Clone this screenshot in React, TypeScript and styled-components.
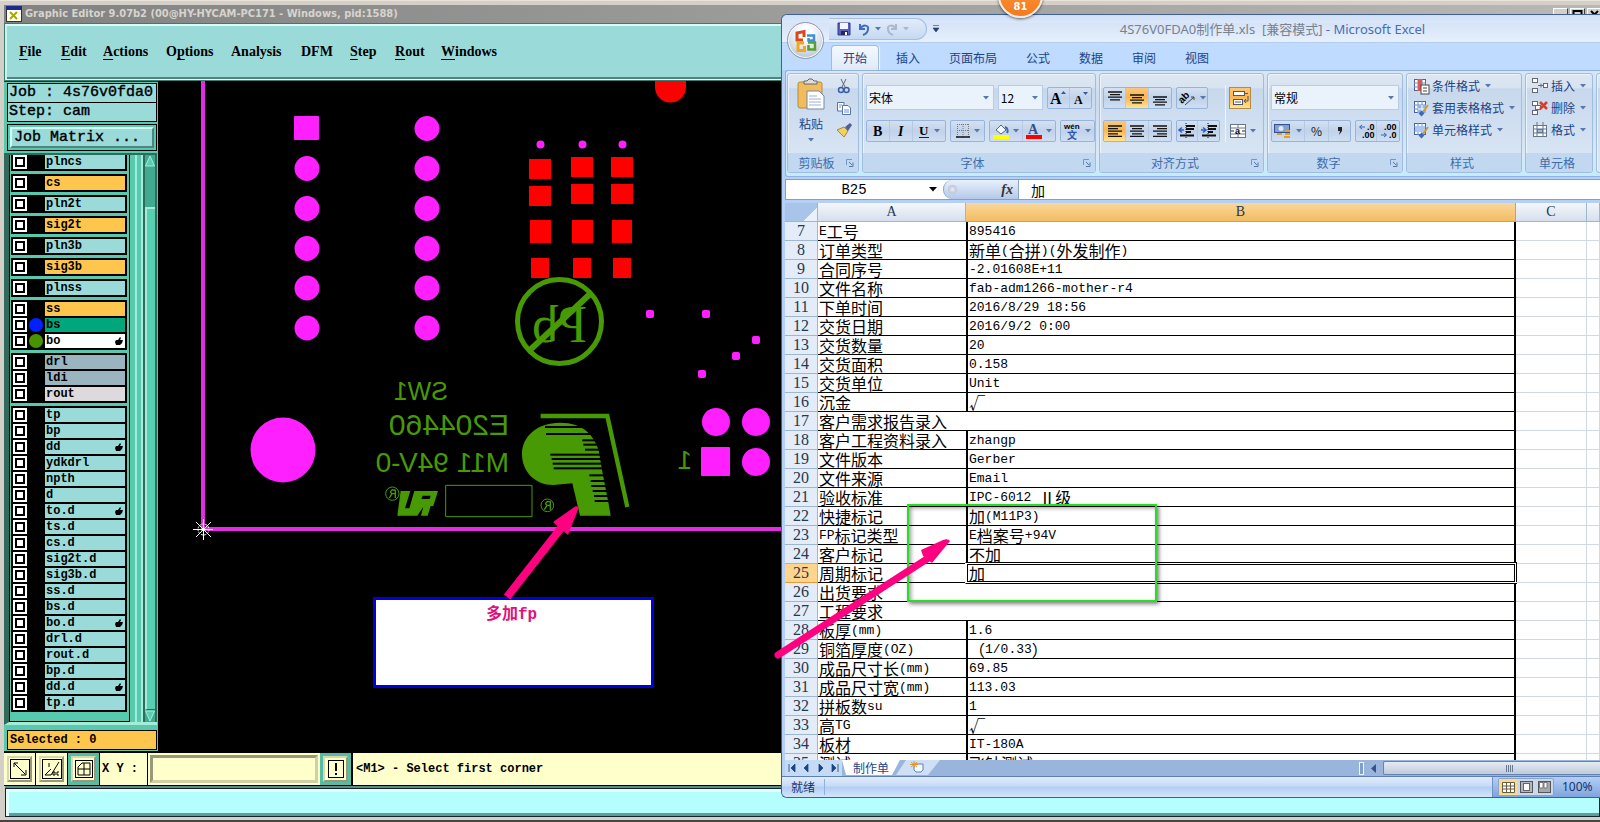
import React from "react";
import styled, { createGlobalStyle, css } from "styled-components";

const cjk = `"Noto Sans CJK SC", sans-serif`;
const ui = `"Noto Sans", ${cjk}`;
const mono = `"Liberation Mono", ${cjk}`;

const GlobalStyle = createGlobalStyle`
  *, *::before, *::after { box-sizing: border-box; }
  body { margin: 0; overflow: hidden; background: #d4d0c8; }
  button, input, select { margin: 0; padding: 0; font: inherit; color: inherit; border-radius: 0; outline: none; }
  button { display: flex; align-items: center; justify-content: center; background: none; border: 0; }
  svg { display: block; flex: none; overflow: visible; }
`;

const Desktop = styled.div`
  position: relative;
  height: 100vh;
  min-height: 760px;
  overflow: hidden;
`;

/* ---------- Graphic editor ---------- */

const Editor = styled.section`
  display: flex;
  flex-direction: column;
  height: 100%;
  padding: 4px 0 3px 4px;
  background: #d4d0c8;
  border-top: 1px solid #e8e4dc;
  border-bottom: 2px solid #46443f;
`;

const EditorTitle = styled.header`
  display: flex;
  align-items: center;
  gap: 3px;
  height: 18px;
  padding-left: 2px;
  background: linear-gradient(90deg, #828282, #b8b8b6);
  color: #d8d4cc;
  font: bold 11px/18px "DejaVu Sans Condensed", sans-serif;
  white-space: nowrap;
`;

const EditorTitleText = styled.span`
  flex: 1;
`;

const WindowButtons = styled.div`
  display: flex;
  gap: 2px;
  padding-top: 1px;
  margin-right: -2px;
`;

const WindowButton = styled.button`
  width: 15px;
  height: 14px;
  background: #d4d0c8;
  border: 1px solid;
  border-color: #fff #404040 #404040 #fff;
`;

const MenuBar = styled.nav`
  display: grid;
  grid-template-columns: 42px 42px 63px 65px 70px 49px 45px 46px 60px;
  align-items: center;
  height: 58px;
  padding: 0 0 2px 12px;
  background: #9adbda;
  border: solid;
  border-width: 3px 0 2px 3px;
  border-color: #d8fcf8 #d8fcf8 #e4fffc #c8f4f0;
  box-shadow: inset 0 -2px 0 #4f8480;
  outline: 1px solid #3d7a70;
  outline-offset: -1px;
  font: bold 14px/16px "Liberation Serif", serif;
`;

const MenuItem = styled.button`
  justify-content: flex-start;
  u { text-underline-offset: 3px; }
`;

const Work = styled.div`
  display: flex;
  flex: 1;
  min-height: 0;
  background: #000;
`;

const Sidebar = styled.aside`
  display: flex;
  flex-direction: column;
  width: 154px;
  padding: 1px 1px 1px 3px;
  background: #57c9ae;
  border-top: 1px solid #143c34;
  font: bold 12px/14px ${mono};
`;

const Info = styled.div`
  height: 20px;
  margin-bottom: -1px;
  padding-left: 1px;
  border: 1px solid #000;
  background: #9adbda;
  font-size: 15px;
  font-weight: 400;
  line-height: 17px;
  white-space: pre;
  -webkit-text-stroke: 0.4px #000;
`;

const MatrixFrame = styled.div`
  margin-top: 3px;
  padding: 2px;
  border: 1px solid #000;
`;

const MatrixButton = styled.button`
  width: 100%;
  height: 21px;
  justify-content: flex-start;
  padding-left: 2px;
  background: #9adbda;
  border: 2px solid;
  border-color: #d4fff8 #4f8480 #4f8480 #d4fff8;
  font-size: 15px;
  font-weight: 400;
  -webkit-text-stroke: 0.4px #000;
`;

const ListArea = styled.div`
  display: flex;
  flex: 1;
  min-height: 0;
  margin: 2px 0 0 -3px;
  border-left: 5px solid #2f6b5c;
  border-top: 2px solid #2f6b5c;
  border-bottom: 3px solid #a4ecd8;
`;

const LayerList = styled.ul`
  display: flex;
  flex-direction: column;
  gap: 3px;
  width: 122px;
  margin: 0;
  padding: 0 2px 0 1px;
  list-style: none;
  overflow: hidden;
  border: solid #000;
  border-width: 0 1px 1px;
`;

const LayerGroup = styled.li`
  display: flex;
  flex-direction: column;
  gap: 2px;
  padding: 2px;
  background: #000;
  &:first-child { padding-top: 0; }
`;

const Layer = styled.label`
  display: grid;
  grid-template-columns: 14px 18px 1fr;
  height: 14px;
`;

const LayerCheck = styled.input`
  appearance: none;
  width: 14px;
  height: 14px;
  background: #fff;
  border: 2px solid #fff;
  box-shadow: inset 0 0 0 2px #000;
`;

const LayerColor = styled.span<{ $color?: string }>`
  width: 14px;
  height: 14px;
  margin-left: 2px;
  border-radius: 7px;
  background: ${(p) => p.$color ?? "transparent"};
`;

const LayerName = styled.span<{ $bg: string }>`
  display: flex;
  justify-content: space-between;
  align-items: center;
  padding: 0 2px 0 1px;
  background: ${(p) => p.$bg};
`;

const ListEdge = styled.div`
  width: 8px;
  margin-left: 5px;
  border: solid #a4ecd8;
  border-width: 0 2px 0 2px;
`;

const LayerScroll = styled.div`
  display: flex;
  flex-direction: column;
  flex: 1;
  border: solid #2f6b5c;
  border-width: 0 2px;
  background: #42a991;
`;

const ScrollThumb = styled.div`
  flex: 1;
  margin-top: 40px;
  background: #57d0b2;
  border: solid #a4ecd8;
  border-width: 2px 0 0 2px;
  border-bottom: 1px solid #2f6b5c;
`;

const Selected = styled.div`
  height: 20px;
  margin-top: 5px;
  padding: 2px;
  border: 1px solid #000;
  background: #ffc64d;
`;

const Canvas = styled.main`
  flex: 1;
  min-width: 0;
  overflow: hidden;
`;

const CommandBar = styled.footer`
  display: flex;
  align-items: stretch;
  height: 35px;
  background: #ffffcc;
  border-top: 2px solid #000;
  border-bottom: 1px solid #000;
  font: bold 12px/32px ${mono};
`;

const ToolSlot = styled.div<{ $active?: boolean }>`
  padding: 3px;
  width: 32px;
  border-right: 1px solid #000;
  background: ${(p) => (p.$active ? "#55bda4" : "#ffffcc")};
`;

const ToolButton = styled.button`
  width: 25px;
  height: 26px;
  background: #ffffcc;
  border: 2px solid;
  border-color: #d8d8ac #98987a #98987a #d8d8ac;
`;

const XYLabel = styled.label`
  width: 48px;
  padding-left: 2px;
  border-right: 1px solid #000;
  white-space: pre;
`;

const XYInput = styled.input`
  width: 168px;
  margin: 2px;
  padding: 0 3px;
  background: #ffffcc;
  border: 3px solid;
  border-color: #98987a #d0d0a4 #d0d0a4 #98987a;
`;

const Hint = styled.output`
  padding-left: 3px;
  border-left: 1px solid #000;
`;

const MessageBar = styled.div`
  height: 29px;
  margin: 2px 0 0 1px;
  border: 1px solid #123;
  background: #b4fffd;
  box-shadow: inset 3px 3px 0 #e0fffc, inset 0 -3px 0 #5f9c9a, 0 -2px 0 #5e8c84;
`;

/* ---------- Annotations ---------- */

const Note = styled.p`
  position: absolute;
  left: 373px;
  top: 597px;
  width: 281px;
  height: 91px;
  margin: 0;
  padding-top: 6px;
  padding-right: 4px;
  border: 3px solid #0000dc;
  background: #fff;
  color: #e2107c;
  font: bold 16px/18px "Liberation Mono", ${cjk};
  text-align: center;
`;

const Overlay = styled.svg`
  position: absolute;
  left: 0;
  top: 0;
  width: 100%;
  height: 100%;
  pointer-events: none;
`;

const GreenFrame = styled.div`
  position: absolute;
  left: 907px;
  top: 504px;
  width: 250px;
  height: 98px;
  border: 2px solid #28dc28;
  box-shadow: 2px 2px 4px rgba(0, 0, 0, 0.5), inset 2px 2px 4px rgba(0, 0, 0, 0.4);
  pointer-events: none;
`;

const CountBadge = styled.div`
  position: absolute;
  left: 998px;
  top: -27px;
  width: 45px;
  height: 45px;
  border: 2px solid #f4ece4;
  border-radius: 50%;
  background: linear-gradient(#ff9a3c, #f47a20);
  box-shadow: 0 1px 3px rgba(0, 0, 0, 0.6);
  color: #fff;
  font: bold 11px/64px "DejaVu Sans Condensed", sans-serif;
  text-align: center;
`;

/* ---------- Spreadsheet window ---------- */

const Excel = styled.section`
  position: absolute;
  left: 781px;
  right: 0;
  top: 14px;
  bottom: 24px;
  display: flex;
  flex-direction: column;
  border: solid #3f5f92;
  border-width: 1px 0 1px 1px;
  border-radius: 6px 0 0 6px;
  background: #b4d0f4;
  overflow: hidden;
  font: 12px/16px ${cjk};
`;

const Caption = styled.header`
  display: flex;
  align-items: center;
  flex: none;
  height: 28px;
  background: linear-gradient(#cfe0f8 0, #dce8f9 30%, #d6e4f8 31%, #e6f0fd 100%);
  border-bottom: 1px solid #b4cdf0;
`;

const QuickAccess = styled.div`
  display: flex;
  align-items: center;
  gap: 4px;
  width: 98px;
  height: 22px;
  margin-left: 47px;
  padding-left: 6px;
  border: 1px solid #a4bee4;
  border-left: 0;
  border-radius: 0 11px 11px 0;
  background: linear-gradient(#e2ecfa, #c6d9f2);
`;

const CustomizeButton = styled.button`
  width: 18px;
  height: 20px;
`;

const WindowTitle = styled.h1`
  flex: 1;
  margin: 0;
  color: #77818f;
  font: 13px/20px ${ui};
  text-align: center;
  white-space: pre;
  span { color: #4a6db0; }
`;

const OfficeButton = styled.button`
  position: absolute;
  left: 5px;
  top: 7px;
  width: 37px;
  height: 37px;
  border: 1px solid #8b99ae;
  border-radius: 50%;
  background: radial-gradient(circle at 50% 30%, #fff 20%, #d4dbe6 60%, #b0bccd 90%);
  box-shadow: inset 0 0 0 1px #f8fafc;
`;

const Tabs = styled.nav`
  display: flex;
  align-items: flex-end;
  flex: none;
  height: 27px;
  padding-left: 49px;
  background: #bfdbff;
`;

const Tab = styled.button<{ $active?: boolean }>`
  height: 25px;
  padding: 0 13px;
  margin-right: 1px;
  border: 1px solid transparent;
  border-bottom: 0;
  color: #1b4486;
  ${(p) =>
    p.$active &&
    css`
      padding: 0 11px;
      margin-right: 3px;
      border-color: #9cbce8;
      border-radius: 4px 4px 0 0;
      background: linear-gradient(#f4f9ff, #dfe9f6);
      box-shadow: 1px 0 1px #fff8e0;
    `}
`;

const Ribbon = styled.div`
  display: flex;
  gap: 3px;
  flex: none;
  height: 107px;
  margin-left: 3px;
  padding: 2px 0 3px 1px;
  border: solid #8fb2e2;
  border-width: 1px 0 1px 1px;
  border-radius: 3px 0 0 3px;
  background: linear-gradient(#dbe6f4, #c9dbf0 30%, #d8e8f8 80%, #c4ecfa);
`;

const Group = styled.section<{ $w?: number }>`
  display: flex;
  flex-direction: column;
  flex: ${(p) => (p.$w ? "none" : "1 0 20px")};
  width: ${(p) => (p.$w ? p.$w + "px" : "auto")};
  border: 1px solid #9fbde0;
  border-radius: 3px;
  background: linear-gradient(#dde7f3 0, #d8e3f1 14%, #c8d8ec 15%, #dbe8f6 100%);
  box-shadow: inset 1px 1px 0 #edf3fa;
  overflow: hidden;
`;

const GroupBody = styled.div`
  display: flex;
  flex-direction: column;
  gap: 10px;
  flex: 1;
  padding: 11px 3px 0;
`;

const ToolRow = styled.div<{ $h: number }>`
  display: flex;
  align-items: center;
  gap: 4px;
  height: ${(p) => p.$h}px;
`;

const GroupCaption = styled.footer`
  display: flex;
  align-items: center;
  height: 19px;
  padding: 0 4px 0 0;
  background: #c1d8f0;
  color: #3f6cab;
  span { flex: 1; text-align: center; }
`;

const Launcher = styled.button`
  width: 9px;
  height: 13px;
`;

const ComboBox = styled.div<{ $w: number }>`
  position: relative;
  display: flex;
  align-items: center;
  width: ${(p) => p.$w}px;
  height: 25px;
  border: 1px solid #b5cde8;
  background: #eaf2fb;
  select {
    appearance: none;
    flex: 1;
    min-width: 0;
    height: 23px;
    padding-left: 2px;
    border: 0;
    background: transparent;
    color: #000;
  }
  svg { margin-right: 4px; pointer-events: none; }
`;

const ButtonSet = styled.div`
  display: flex;
  height: 22px;
  border: 1px solid #96b4dc;
  border-radius: 2px;
  background: linear-gradient(#d5e1f0, #c0d2ea 50%, #cfdef2);
`;

const SetButton = styled.button<{ $w: number; $on?: boolean }>`
  width: ${(p) => p.$w}px;
  gap: 4px;
  border-right: 1px solid #b4c9e4;
  color: #222;
  &:last-child { border-right: 0; }
  ${(p) => p.$on && css`background: linear-gradient(#f9c77d, #fbb552 45%, #ffe48c);`}
`;

const WrapToggle = styled.button`
  width: 22px;
  height: 22px;
  border: 1px solid #b58a45;
  background: linear-gradient(#f9c77d, #fbb552 45%, #ffe48c);
`;

const PlainButton = styled.button<{ $w?: number }>`
  width: ${(p) => p.$w ?? 28}px;
  gap: 4px;
`;

const AlignColumns = styled.div`
  display: grid;
  grid-template-columns: 118px 1fr;
  column-gap: 2px;
`;

const MergeColumn = styled.div`
  display: flex;
  flex-direction: column;
  gap: 10px;
  padding-left: 3px;
  border-left: 1px solid #eef4fb;
  margin-left: 2px;
`;

const Stack = styled.div`
  display: flex;
  flex-direction: column;
  gap: 10px;
`;

const Clipboard = styled.div`
  display: grid;
  grid-template-columns: 46px 24px;
  flex: 1;
  padding-top: 4px;
`;

const PasteButton = styled.button`
  flex-direction: column;
  justify-content: flex-start;
  gap: 6px;
  color: #1b4486;
`;

const ClipColumn = styled.div`
  display: flex;
  flex-direction: column;
  gap: 6px;
`;

const CommandList = styled.div`
  display: flex;
  flex-direction: column;
  gap: 6px;
  padding: 4px 0 0 6px;
  flex: 1;
`;

const Command = styled.button`
  justify-content: flex-start;
  gap: 3px;
  height: 16px;
  color: #1b4486;
  white-space: nowrap;
  span { margin-right: 2px; }
`;

const FormulaBar = styled.div`
  display: flex;
  flex: none;
  height: 21px;
  margin: 2px 0 3px 3px;
  border: solid #7f9fcc;
  border-width: 1px 0 1px 1px;
  background: #fff;
`;

const NameBox = styled.input`
  width: 136px;
  border: 0;
  text-align: center;
  font: 14px/18px ${mono};
`;

const FunctionBox = styled.div`
  display: flex;
  align-items: center;
  justify-content: space-between;
  width: 76px;
  padding: 0 5px 0 4px;
  border: 1px solid #8ba6cc;
  border-top: 0;
  border-bottom: 0;
  border-radius: 9px 0 0 9px;
  background: linear-gradient(#e8f0fb, #b4c9e8);
  color: #333;
  font: italic bold 14px/18px "Liberation Serif", serif;
`;

const Knob = styled.i`
  width: 9px;
  height: 9px;
  border-radius: 50%;
  background: radial-gradient(#e8ecf4, #a8b4c8);
`;

const FormulaInput = styled.input`
  flex: 1;
  min-width: 0;
  padding-left: 12px;
  border: 0;
  font: 14px/18px ${cjk};
`;

const SheetView = styled.div`
  flex: 1;
  min-height: 0;
  margin-left: 3px;
  overflow: hidden;
  background: #fff;
`;

const Sheet = styled.table`
  width: 100%;
  table-layout: fixed;
  border-collapse: separate;
  border-spacing: 0;
  color: #000;
`;

const ColHead = styled.th<{ $on?: boolean }>`
  height: 19px;
  padding: 0;
  border: solid #9eb6ce;
  border-width: 0 1px 1px 0;
  background: linear-gradient(#f4f7fb, #d5dfec);
  color: #27384c;
  font: 14px/18px "Liberation Serif", serif;
  ${(p) =>
    p.$on &&
    css`
      border-color: #e69b35;
      background: linear-gradient(#fad79c, #f3bd62);
    `}
`;

const Corner = styled(ColHead)`
  background: linear-gradient(135deg, #a9c4e9 72%, #e8f0fa 73%);
`;

const RowHead = styled.th<{ $on?: boolean }>`
  height: 19px;
  padding: 0;
  border: solid #9eb6ce;
  border-width: 0 1px 1px 0;
  background: ${(p) => (p.$on ? "#ffd58d" : "#e4ecf7")};
  border-bottom-color: ${(p) => (p.$on ? "#e69b35" : "#9eb6ce")};
  color: #27384c;
  font: 16px/18px "Liberation Serif", serif;
`;

const Cell = styled.td<{ $line?: boolean; $left?: boolean; $right?: boolean; $active?: boolean }>`
  position: relative;
  height: 19px;
  padding: 0 0 0 1px;
  border: 0 solid #000;
  border-bottom: 1px solid ${(p) => (p.$line ? "#000" : "#d0d7e5")};
  border-left-width: ${(p) => (p.$left ? 2 : 0)}px;
  border-right-width: ${(p) => (p.$right ? 2 : 0)}px;
  ${(p) =>
    !p.$line &&
    css`
      border-right: 1px solid #d0d7e5;
    `}
  ${(p) =>
    p.$active &&
    css`
      &::after {
        content: "";
        position: absolute;
        inset: -2px -3px -2px -3px;
        border: 1px solid #000;
        border-left-color: #fff;
        box-shadow: inset 0 0 0 1px #fff, inset 0 0 0 2px #000;
      }
    `}
`;

const CellText = styled.div`
  display: flex;
  align-items: flex-start;
  height: 18px;
  white-space: pre;
`;

const Latin = styled.span`
  font: 13px/20px ${mono};
`;

const Wide = styled.span`
  font: 16px/18px ${cjk};
`;

const SheetBar = styled.div`
  display: flex;
  flex: none;
  height: 16px;
  margin-left: 3px;
  background: #9ab5dc;
  color: #1b4486;
`;

const SheetNav = styled.div`
  display: flex;
  align-items: center;
  justify-content: space-around;
  width: 57px;
  background: #c5daf5;
`;

const SheetTab = styled.button`
  width: 58px;
  height: 15px;
  background: #fff;
  clip-path: polygon(0 0, 100% 0, calc(100% - 8px) 100%, 4px 100%);
  line-height: 14px;
`;

const NewSheet = styled.button`
  width: 44px;
  height: 15px;
  margin-left: -4px;
  background: #cfe0f6;
  clip-path: polygon(10px 0, 100% 0, calc(100% - 12px) 100%, 0 100%);
`;

const HScroll = styled.div`
  display: flex;
  align-items: center;
  gap: 7px;
  width: 241px;
  margin-left: auto;
`;

const Splitter = styled.i`
  width: 5px;
  height: 13px;
  border: 1px solid #eef4fc;
  background: #7f9fcc;
`;

const HThumb = styled.div`
  display: flex;
  align-items: center;
  justify-content: center;
  flex: 1;
  height: 14px;
  padding-left: 36px;
  border: 1px solid #6683b4;
  border-right: 0;
  border-radius: 2px 0 0 2px;
  background: linear-gradient(#e4ebf3, #c0cbd9);
`;

const StatusBar = styled.footer`
  display: flex;
  align-items: center;
  flex: none;
  height: 21px;
  border-top: 1px solid #5c7fb5;
  background: linear-gradient(#e0ecfc 0, #c6dbf7 45%, #b2cdf3 50%, #d4e5fb 100%);
  color: #15356e;
`;

const StatusText = styled.span`
  padding: 0 9px;
  border-right: 1px solid #8fb0e0;
`;

const ViewArea = styled.div`
  display: flex;
  align-items: center;
  gap: 8px;
  height: 20px;
  width: 108px;
  margin-left: auto;
  padding-left: 5px;
  border-left: 1px solid #6f92c8;
  background: linear-gradient(#b4cff5, #7fa4dc);
`;

const ViewButtons = styled.div`
  display: flex;
  border: 1px solid #88a4cc;
  border-radius: 2px;
  background: #c8d8ee;
`;

const ViewButton = styled.button<{ $on?: boolean }>`
  width: 18px;
  height: 16px;
  background: ${(p) => (p.$on ? "#fbd98e" : "transparent")};
`;

const Zoom = styled.span`
  font: 12px/18px ${ui};
`;

/* ---------- Data ---------- */

const AQUA = "#9adbda";
const GOLD = "#ffc64d";

type LayerInfo = { n: string; bg?: string; dot?: string; hand?: boolean };

const layerGroups: LayerInfo[][] = [
  [{ n: "plncs" }],
  [{ n: "cs", bg: GOLD }],
  [{ n: "pln2t" }],
  [{ n: "sig2t", bg: GOLD }],
  [{ n: "pln3b" }],
  [{ n: "sig3b", bg: GOLD }],
  [{ n: "plnss" }],
  [
    { n: "ss", bg: GOLD },
    { n: "bs", bg: "#00a67c", dot: "#0020ff" },
    { n: "bo", bg: "#fff", dot: "#489400", hand: true },
  ],
  [
    { n: "drl", bg: "#9ab4c0" },
    { n: "ldi", bg: "#9ab4c0" },
    { n: "rout", bg: "#dcdadc" },
  ],
  [
    ...["tp", "bp", "dd*", "ydkdrl", "npth", "d", "to.d*", "ts.d", "cs.d", "sig2t.d", "sig3b.d", "ss.d", "bs.d", "bo.d*", "drl.d", "rout.d", "bp.d", "dd.d*", "tp.d"].map((s) => ({
      n: s.replace("*", ""),
      hand: s.endsWith("*"),
    })),
  ],
];

const sheetRows: [number, string, string?][] = [
  [7, "E工号", "895416"],
  [8, "订单类型", "新单(合拼)(外发制作)"],
  [9, "合同序号", "-2.01608E+11"],
  [10, "文件名称", "fab-adm1266-mother-r4"],
  [11, "下单时间", "2016/8/29 18:56"],
  [12, "交货日期", "2016/9/2 0:00"],
  [13, "交货数量", "20"],
  [14, "交货面积", "0.158"],
  [15, "交货单位", "Unit"],
  [16, "沉金", "√"],
  [17, "客户需求报告录入"],
  [18, "客户工程资料录入", "zhangp"],
  [19, "文件版本", "Gerber"],
  [20, "文件来源", "Email"],
  [21, "验收标准", "IPC-6012 Ⅱ级"],
  [22, "快捷标记", "加(M11P3)"],
  [23, "FP标记类型", "E档案号+94V"],
  [24, "客户标记", "不加"],
  [25, "周期标记", "加"],
  [26, "出货要求"],
  [27, "工程要求"],
  [28, "板厚(mm)", "1.6"],
  [29, "铜箔厚度(OZ)", "（1/0.33）"],
  [30, "成品尺寸长(mm)", "69.85"],
  [31, "成品尺寸宽(mm)", "113.03"],
  [32, "拼板数su", "1"],
  [33, "高TG", "√"],
  [34, "板材", "IT-180A"],
  [35, "测试", "飞针测试"],
];

const menus: [string, string, string][] = [
  ["", "F", "ile"],
  ["", "E", "dit"],
  ["", "A", "ctions"],
  ["O", "p", "tions"],
  ["Analysis", "", ""],
  ["DFM", "", ""],
  ["", "S", "tep"],
  ["", "R", "out"],
  ["", "W", "indows"],
];

/* ---------- Small drawings ---------- */

const Caret = ({ color = "#5878ac" }: { color?: string }) => (
  <svg width="6" height="4">
    <path d="M0 0H6L3 3.5Z" fill={color} />
  </svg>
);

const Lines = ({ rows, y = 3 }: { rows: [number, number][]; y?: number }) => (
  <svg width="16" height="16" stroke="#111" strokeWidth="1.3">
    {rows.map(([a, b], i) => (
      <path key={i} d={`M${a} ${y + i * 2.6}H${b}`} />
    ))}
  </svg>
);

const Indent = ({ right }: { right?: boolean }) => (
  <svg width="18" height="16">
    <path d="M8 3H17M8 6H16M8 9H13M2 12.500H16" stroke="#111" strokeWidth="1.8" />
    <path d="M8 0V16" stroke="#111" strokeDasharray="1 1" />
    <path d={right ? "M1 7H5M3 4.5L6 7L3 9.5" : "M6 7H2M4 4.5L1 7L4 9.5"} stroke="#2f62c0" strokeWidth="1.5" fill="none" />
  </svg>
);

const Hand = () => (
  <svg width="8" height="8">
    <path d="M1 3L3 3L5 0L6 1L5 3H8L7 6L5 8H1L0 5Z" fill="#000" />
  </svg>
);

const GridIcon = ({ extra }: { extra: React.ReactNode }) => (
  <svg width="16" height="16">
    <rect x="1.500" y="1.500" width="11" height="11" fill="#fff" stroke="#48629a" />
    <path d="M1 5H13M1 9H13M5 1V13M9 1V13" stroke="#6f8fc8" />
    {extra}
  </svg>
);

const LaunchIcon = () => (
  <svg width="8" height="8">
    <path d="M.5 6V.5H6" stroke="#7894c0" fill="none" />
    <path d="M3 3L6 6M7 3.500V7.500H3" stroke="#5478ac" fill="none" />
  </svg>
);

const GroupFooter = ({ text, launch }: { text: string; launch?: boolean }) => (
  <GroupCaption>
    <span>{text}</span>
    {launch && (
      <Launcher aria-label={text}>
        <LaunchIcon />
      </Launcher>
    )}
  </GroupCaption>
);

const Runs = ({ text }: { text: string }) => (
  <CellText>
    {text.split(/([\x20-\x7e]+)/).filter(Boolean).map((part, i) =>
      /^[\x20-\x7e]/.test(part) ? <Latin key={i}>{part}</Latin> : <Wide key={i}>{part}</Wide>
    )}
  </CellText>
);

const Mirrored = ({ x, y, size, family = "Liberation Sans", children }: { x: number; y: number; size: number; family?: string; children: string }) => (
  <text transform={`translate(${x} ${y}) scale(-1 1)`} fontSize={size} fontFamily={family}>
    {children}
  </text>
);

const MAG = "#ff20ff";
const GREEN = "#489a04";

/* dark slots cut into the emblem: y, left, right */
const emblemSlots: [number, number, number][] = [
  [78, 525, 640], [99, 528, 660], [118, 637, 690], [131, 640, 700], [146, 645, 700],
  [161, 541, 700], [174, 545, 700], [188, 548, 705], [202, 551, 705], [223, 658, 712],
  [240, 662, 715], [255, 664, 718], [270, 668, 720], [285, 672, 724], [300, 674, 726],
];

const Board = () => (
  <svg width="1442" height="671" viewBox="158 81 1442 671">
    <g fill={MAG}>
      <rect x="294" y="116" width="25" height="24" rx="1" />
      <circle cx="427" cy="128.500" r="12.500" />
      {[168.5, 208.5, 248.5, 288, 328].map((y) => (
        <React.Fragment key={y}>
          <circle cx="307" cy={y} r="12.500" />
          <circle cx="427" cy={y} r="12.500" />
        </React.Fragment>
      ))}
      <circle cx="283" cy="450" r="32.500" />
      {[540.5, 582.5, 622.5].map((x) => <circle key={x} cx={x} cy="144.500" r="4" />)}
      {[[650, 314], [706, 314], [756, 340], [736, 356], [702, 374]].map(([x, y]) => (
        <rect key={x} x={x - 4} y={y - 4} width="8" height="8" rx="2" />
      ))}
      <circle cx="716" cy="422" r="14" />
      <circle cx="756" cy="422" r="14" />
      <circle cx="756" cy="462" r="14" />
      <rect x="701" y="447" width="29" height="29" rx="1" />
    </g>
    <path d="M203 81V529H1600" fill="none" stroke="#e42ce4" strokeWidth="4" />
    <g stroke="#fff" fill="none">
      <path d="M193 529.500H213M203.500 519V540M196 522L211 537M211 522L196 537" />
      <circle cx="203.500" cy="529.500" r="5.500" strokeDasharray="2 1" />
    </g>
    <g fill="#f00">
      <path d="M655 81H686V87A15.500 15.500 0 0 1 655 87Z" />
      <path d="M529 159h22v20h-22zM529 186h22v20h-22zM530 220h21v23h-21zM531 258h18v20h-18z" />
      <path d="M571 157h22v20h-22zM571 184h22v20h-22zM572 220h21v23h-21zM573 258h18v20h-18z" />
      <path d="M611 157h22v20h-22zM611 184h22v20h-22zM612 220h20v23h-20zM613 258h18v20h-18z" />
    </g>
    <g fill={GREEN}>
      <Mirrored x={587} y={342} size={52} family="Liberation Serif">Pb</Mirrored>
      <circle cx="559.500" cy="321.500" r="42" fill="none" stroke={GREEN} strokeWidth="5" />
      <path d="M530 350L590 294" stroke={GREEN} strokeWidth="6" />
      <Mirrored x={448} y={400} size={25}>SW1</Mirrored>
      <Mirrored x={509} y={435} size={30}>E204460</Mirrored>
      <Mirrored x={509} y={472} size={28}>M11 94V-0</Mirrored>
      <Mirrored x={692} y={469} size={26}>1</Mirrored>
    </g>
    <g transform="translate(370 400) scale(.33333)">
      <path d="M570 68C500 68 456 110 456 162C456 215 495 255 550 255L607 250L630 347H722L716 312L697 215L686 150C670 105 640 68 570 68Z" fill={GREEN} />
      {emblemSlots.map(([y, a, b]) => <rect key={y} x={a} y={y} width={b - a} height="6" fill="#000" />)}
      <path d="M512 48H712L772 321" fill="none" stroke={GREEN} strokeWidth="13" />
      <path d="M227 256H486V350H227Z" fill="none" stroke={GREEN} strokeWidth="3" />
      <path d="M92 273H121L105 325H118L133 273H204L190 318H182L173 347H153L160 320L142 347H82Z" fill={GREEN} />
      <path d="M158 287H182L179 297H154Z" fill="#000" />
      <circle cx="67" cy="281" r="20" fill="none" stroke={GREEN} strokeWidth="3" />
      <circle cx="532" cy="316" r="19" fill="none" stroke={GREEN} strokeWidth="3" />
      <path d="M76 269V294M76 270H66Q58 276 66 281H76M66 281L58 294" fill="none" stroke={GREEN} strokeWidth="4" />
      <path d="M541 304V329M541 305H531Q523 311 531 316H541M531 316L523 329" fill="none" stroke={GREEN} strokeWidth="4" />
    </g>
  </svg>
);

/* ---------- Page ---------- */

export default function App() {
  return (
    <Desktop>
      <GlobalStyle />
      <Editor>
        <EditorTitle>
          <svg width="16" height="16">
            <rect x=".5" y=".5" width="15" height="15" fill="#fffff0" stroke="#333" />
            <rect width="16" height="4" fill="#1a2a90" />
            <path d="M4 6L11 13M11 6L4 13" stroke="#a8a800" strokeWidth="2" />
          </svg>
          <EditorTitleText>Graphic Editor 9.07b2 (00@HY-HYCAM-PC171 - Windows, pid:1588)</EditorTitleText>
          <WindowButtons>
            <WindowButton aria-label="Minimize" />
            <WindowButton aria-label="Maximize">
              <svg width="9" height="9"><path d="M.5 0V9M8.500 0V9M0 1H9" stroke="#000" strokeWidth="2" /></svg>
            </WindowButton>
            <WindowButton aria-label="Close">
              <svg width="9" height="9"><path d="M1 1L8 8M8 1L1 8" stroke="#000" strokeWidth="2" /></svg>
            </WindowButton>
          </WindowButtons>
        </EditorTitle>
        <MenuBar>
          {menus.map(([a, u, b]) => (
            <MenuItem key={a + u + b}>
              {a}
              {u && <u>{u}</u>}
              {b}
            </MenuItem>
          ))}
        </MenuBar>
        <Work>
          <Sidebar>
            <Info>Job : 4s76v0fda0</Info>
            <Info>Step: cam</Info>
            <MatrixFrame>
              <MatrixButton>Job Matrix ...</MatrixButton>
            </MatrixFrame>
            <ListArea>
              <LayerList>
                {layerGroups.map((g, i) => (
                  <LayerGroup key={i}>
                    {g.map((l) => (
                      <Layer key={l.n}>
                        <LayerCheck type="checkbox" />
                        <LayerColor $color={l.dot} />
                        <LayerName $bg={l.bg ?? AQUA}>
                          {l.n}
                          {l.hand && <Hand />}
                        </LayerName>
                      </Layer>
                    ))}
                  </LayerGroup>
                ))}
              </LayerList>
              <ListEdge />
              <LayerScroll>
                <svg width="10" height="12"><path d="M5 1L9.500 11H.5Z" fill="#57d0b2" stroke="#a4ecd8" /></svg>
                <ScrollThumb />
                <svg width="10" height="12"><path d="M5 11L9.500 1H.5Z" fill="#57d0b2" stroke="#a4ecd8" /></svg>
              </LayerScroll>
            </ListArea>
            <Selected>Selected : 0</Selected>
          </Sidebar>
          <Canvas>
            <Board />
          </Canvas>
        </Work>
        <CommandBar>
          <ToolSlot>
            <ToolButton aria-label="Zoom window">
              <svg width="20" height="20" stroke="#000" fill="none"><rect x=".5" y=".5" width="19" height="19" /><path d="M4 8V4H8M4 4L15 15M16 11V16H11" /></svg>
            </ToolButton>
          </ToolSlot>
          <ToolSlot>
            <ToolButton aria-label="Measure angle">
              <svg width="20" height="20" stroke="#000" fill="none"><rect x=".5" y=".5" width="19" height="19" /><path d="M3 16H9L17 3M3 16L9 10M7 4V8M11 13H13V16H11ZM17 13H15V16H17" /></svg>
            </ToolButton>
          </ToolSlot>
          <ToolSlot $active>
            <ToolButton aria-label="Toggle grid">
              <svg width="18" height="18" stroke="#000" fill="none"><rect x=".5" y=".5" width="17" height="17" /><path d="M3 15V7L7 3H15V15ZM3 9H15M9 3V15" /></svg>
            </ToolButton>
          </ToolSlot>
          <XYLabel htmlFor="xy">X Y :</XYLabel>
          <XYInput id="xy" />
          <ToolSlot $active>
            <ToolButton aria-label="Alert">
              <svg width="16" height="18" stroke="#000" fill="none"><rect x=".5" y=".5" width="15" height="17" /><path d="M8 3V11M8 13V15" strokeWidth="2" /></svg>
            </ToolButton>
          </ToolSlot>
          <Hint>{"<M1> - Select first corner"}</Hint>
        </CommandBar>
        <MessageBar />
      </Editor>

      <Note>多加fp</Note>

      <Excel>
        <Caption>
          <QuickAccess>
            <PlainButton $w={18} aria-label="保存">
              <svg width="14" height="14"><path d="M1 1H13V13H1Z" fill="#5b5fc0" stroke="#33388a" /><rect x="3" y="1" width="8" height="6" fill="#f4f6ff" /><rect x="4" y="9" width="7" height="4" fill="#222a50" /><rect x="8" y="10" width="2" height="3" fill="#fff" /></svg>
            </PlainButton>
            <svg width="14" height="14"><path d="M3 2V7H8M3 7C6 2 12 3 11 7C11 10 9 12 6 13" fill="none" stroke="#3d6ec4" strokeWidth="2" /></svg>
            <Caret />
            <svg width="14" height="14"><path d="M11 2V7H6M11 7C8 2 2 3 3 7C3 10 5 12 8 13" fill="none" stroke="#a9b8d0" strokeWidth="2" /></svg>
            <Caret color="#a9b8d0" />
          </QuickAccess>
          <CustomizeButton aria-label="自定义快速访问工具栏">
            <svg width="6" height="8"><path d="M0 .5H6M0 3H6L3 7Z" fill="#24407c" stroke="#24407c" strokeWidth=".6" /></svg>
          </CustomizeButton>
          <WindowTitle>
            4S76V0FDA0制作单.xls  [兼容模式] <span>- Microsoft Excel</span>
          </WindowTitle>
        </Caption>
        <Tabs>
          <Tab $active>开始</Tab>
          {["插入", "页面布局", "公式", "数据", "审阅", "视图"].map((t) => <Tab key={t}>{t}</Tab>)}
        </Tabs>
        <OfficeButton aria-label="Office">
          <svg width="24" height="24" fill="none" strokeWidth="3">
            <path d="M9 11H3V4L10 2.500V8" stroke="#d8481c" />
            <path d="M13 6.500H20V11.500H14.500V9" stroke="#3f8fd8" strokeWidth="2.500" />
            <path d="M10 14H4V21.500H10.500V17" stroke="#f0a820" />
            <path d="M14 13.500H21V20.500H14.500V16" stroke="#54a030" strokeWidth="2.500" />
          </svg>
        </OfficeButton>
        <Ribbon>
          <Group $w={72}>
            <Clipboard>
              <PasteButton>
                <svg width="28" height="32">
                  <rect x="1" y="4" width="24" height="26" rx="2" fill="#f0bc5c" stroke="#b98a38" />
                  <path d="M7 6V3H10L12 1H15L17 3H20V6Z" fill="#ddd" stroke="#666" />
                  <path d="M10 13H22L27 18V31H10Z" fill="#fff" stroke="#7488a8" />
                  <path d="M12 18H20M12 21H24M12 24H24M12 27H24" stroke="#9ab0d4" />
                </svg>
                粘贴
                <Caret />
              </PasteButton>
              <ClipColumn>
                <PlainButton $w={20} aria-label="剪切">
                  <svg width="16" height="16" fill="none" stroke="#3b5ea8"><path d="M5 1L9 9M10 1L6 9" stroke="#667" /><circle cx="5" cy="12" r="2.500" strokeWidth="1.500" /><circle cx="10.500" cy="12" r="2.500" strokeWidth="1.500" /></svg>
                </PlainButton>
                <PlainButton $w={20} aria-label="复制">
                  <svg width="16" height="16" fill="#fff" stroke="#5474ac"><path d="M1.500 2.500H8V11H1.500Z" /><path d="M6.500 5.500H12L14.500 8V14.500H6.500Z" /><path d="M8 10H13M8 12H13M3 5H6M3 7H5" stroke="#6f94d8" /></svg>
                </PlainButton>
                <PlainButton $w={20} aria-label="格式刷">
                  <svg width="16" height="16"><path d="M1 8L8 5L12 9L8 15Z" fill="#f0d068" stroke="#a88830" /><path d="M9 5L14 1L16 3L12 9Z" fill="#4f5f98" /></svg>
                </PlainButton>
              </ClipColumn>
            </Clipboard>
            <GroupFooter text="剪贴板" launch />
          </Group>

          <Group $w={234}>
            <GroupBody>
              <ToolRow $h={25}>
                <ComboBox $w={130}>
                  <select aria-label="字体"><option>宋体</option></select>
                  <Caret />
                </ComboBox>
                <ComboBox $w={46}>
                  <select aria-label="字号"><option>12</option></select>
                  <Caret />
                </ComboBox>
                <ButtonSet>
                  <SetButton $w={22} aria-label="增大字号"><svg width="17" height="18"><text x="0" y="15" fontFamily="Liberation Serif" fontWeight="700" fontSize="16">A</text><path d="M11 5L13.500 2L16 5Z" fill="#3558a0" /></svg></SetButton>
                  <SetButton $w={21} aria-label="减小字号"><svg width="16" height="18"><text x="1" y="15" fontFamily="Liberation Serif" fontWeight="700" fontSize="12">A</text><path d="M10 3L12.500 6L15 3Z" fill="#3558a0" /></svg></SetButton>
                </ButtonSet>
              </ToolRow>
              <ToolRow $h={22}>
                <ButtonSet>
                  <SetButton $w={23} aria-label="加粗"><svg width="12" height="16"><text x="1" y="13" fontFamily="Liberation Serif" fontWeight="700" fontSize="14">B</text></svg></SetButton>
                  <SetButton $w={23} aria-label="倾斜"><svg width="12" height="16"><text x="3" y="13" fontFamily="Liberation Serif" fontWeight="700" fontStyle="italic" fontSize="14">I</text></svg></SetButton>
                  <SetButton $w={32} aria-label="下划线"><svg width="12" height="16"><text x="1" y="12" fontFamily="Liberation Serif" fontWeight="700" fontSize="13">U</text><path d="M1 14.500H11" stroke="#222" /></svg><Caret /></SetButton>
                </ButtonSet>
                <ButtonSet>
                  <SetButton $w={33} aria-label="边框"><svg width="14" height="14"><path d="M1.500 0V13M7 0V13M12.500 0V13M1 .5H13M1 6.500H13" stroke="#777" strokeDasharray="1 1" /><path d="M0 13H14" stroke="#111" strokeWidth="1.500" /></svg><Caret /></SetButton>
                </ButtonSet>
                <ButtonSet>
                  <SetButton $w={33} aria-label="填充颜色"><svg width="16" height="16"><path d="M3 7L8 2L13 7L8 11Z" fill="#f4f7fc" stroke="#567" /><path d="M12 4C15 5 15 8 14 10" stroke="#3b68b8" strokeWidth="2" fill="none" /><rect y="12" width="16" height="4" fill="#ff0" /></svg><Caret /></SetButton>
                  <SetButton $w={32} aria-label="字体颜色"><svg width="16" height="16"><text x="2" y="11" fontFamily="Liberation Serif" fontWeight="700" fontSize="14" fill="#2f4f90">A</text><rect y="12" width="16" height="4" fill="#f00" /></svg><Caret /></SetButton>
                </ButtonSet>
                <ButtonSet>
                  <SetButton $w={33} aria-label="拼音指南"><svg width="17" height="18"><text x="0" y="7" fontFamily="Liberation Sans" fontWeight="700" fontSize="8">wén</text><text x="3" y="17" fontFamily="Noto Sans CJK SC" fontWeight="700" fontSize="10" fill="#2f55b0">文</text></svg><Caret /></SetButton>
                </ButtonSet>
              </ToolRow>
            </GroupBody>
            <GroupFooter text="字体" launch />
          </Group>

          <Group $w={165}>
            <GroupBody>
              <AlignColumns>
                <Stack>
                  <ToolRow $h={25}>
                    <ButtonSet>
                      <SetButton $w={22} aria-label="顶端对齐"><Lines rows={[[1, 15], [3, 13], [1, 15], [3, 13]]} y={2} /></SetButton>
                      <SetButton $w={23} $on aria-label="垂直居中"><Lines rows={[[1, 15], [3, 13], [1, 15], [3, 13]]} y={5} /></SetButton>
                      <SetButton $w={22} aria-label="底端对齐"><Lines rows={[[1, 15], [3, 13], [1, 15], [3, 13]]} y={7} /></SetButton>
                    </ButtonSet>
                    <ButtonSet>
                      <SetButton $w={30} aria-label="方向"><svg width="17" height="16"><text x="0" y="11" transform="rotate(-45 5 9)" fontFamily="Liberation Sans" fontWeight="700" fontSize="10">ab</text><path d="M6 15L15 7M12 7H15V10" stroke="#444" fill="none" /></svg><Caret /></SetButton>
                    </ButtonSet>
                  </ToolRow>
                  <ToolRow $h={22}>
                    <ButtonSet>
                      <SetButton $w={22} $on aria-label="左对齐"><Lines rows={[[1, 15], [1, 11], [1, 15], [1, 11], [1, 15]]} /></SetButton>
                      <SetButton $w={23} aria-label="居中"><Lines rows={[[1, 15], [3, 13], [1, 15], [3, 13], [1, 15]]} /></SetButton>
                      <SetButton $w={22} aria-label="右对齐"><Lines rows={[[1, 15], [5, 15], [1, 15], [5, 15], [1, 15]]} /></SetButton>
                    </ButtonSet>
                    <ButtonSet>
                      <SetButton $w={21} aria-label="减少缩进量"><Indent /></SetButton>
                      <SetButton $w={21} aria-label="增加缩进量"><Indent right /></SetButton>
                    </ButtonSet>
                  </ToolRow>
                </Stack>
                <MergeColumn>
                  <ToolRow $h={25}>
                    <WrapToggle aria-label="自动换行"><svg width="17" height="16" fill="#fff" stroke="#556"><rect x="1.500" y="1.500" width="11" height="4" /><rect x="1.500" y="9.500" width="9" height="5" /><path d="M13 3.500H16M16 6V11H12M14 9L12 11L14 13M3 12H9" fill="none" /></svg></WrapToggle>
                  </ToolRow>
                  <ToolRow $h={22}>
                    <PlainButton aria-label="合并后居中"><svg width="16" height="14"><rect x=".5" y=".5" width="15" height="13" fill="#fff" stroke="#678" /><path d="M0 4H16M0 10H16M8 0V4M8 10V14" stroke="#678" /><text x="5" y="10" fontFamily="Liberation Sans" fontWeight="700" fontSize="9">a</text><path d="M1 7H4M12 7H15" stroke="#222" /></svg><Caret /></PlainButton>
                  </ToolRow>
                </MergeColumn>
              </AlignColumns>
            </GroupBody>
            <GroupFooter text="对齐方式" launch />
          </Group>

          <Group $w={136}>
            <GroupBody>
              <ToolRow $h={25}>
                <ComboBox $w={128}>
                  <select aria-label="数字格式"><option>常规</option></select>
                  <Caret />
                </ComboBox>
              </ToolRow>
              <ToolRow $h={22}>
                <ButtonSet>
                  <SetButton $w={33} aria-label="会计数字格式"><svg width="18" height="16"><rect x=".5" y="1.500" width="15" height="8" fill="#7f9fd8" stroke="#35508c" /><circle cx="7" cy="5.500" r="2.500" fill="#dfe8fa" /><path d="M3 11H8M10 14H16M11 11H16M11 8H16" stroke="#e0a020" strokeWidth="2" /></svg><Caret /></SetButton>
                  <SetButton $w={24} aria-label="百分比样式">%</SetButton>
                  <SetButton $w={21} aria-label="千位分隔样式"><svg width="6" height="10"><path d="M1 1H5V5L2 9L3 5H1Z" fill="#222" /></svg></SetButton>
                </ButtonSet>
                <ButtonSet>
                  <SetButton $w={21} aria-label="增加小数位数"><svg width="17" height="16"><text x="9" y="7" fontFamily="Liberation Sans" fontWeight="700" fontSize="9">.0</text><text x="4" y="15" fontFamily="Liberation Sans" fontWeight="700" fontSize="9">.00</text><path d="M7 4H2M4 2L1.500 4L4 6" stroke="#2f62c0" fill="none" /></svg></SetButton>
                  <SetButton $w={22} aria-label="减少小数位数"><svg width="17" height="16"><text x="4" y="7" fontFamily="Liberation Sans" fontWeight="700" fontSize="9">.00</text><text x="9" y="15" fontFamily="Liberation Sans" fontWeight="700" fontSize="9">.0</text><path d="M1 12H6M4 10L6.500 12L4 14" stroke="#2f62c0" fill="none" /></svg></SetButton>
                </ButtonSet>
              </ToolRow>
            </GroupBody>
            <GroupFooter text="数字" launch />
          </Group>

          <Group $w={116}>
            <CommandList>
              <Command><GridIcon extra={<><path d="M5 1H9V13H5Z" fill="#e05850" /><rect x="8" y="7" width="8" height="9" fill="#fff" stroke="#444" /><path d="M10 10H14M10 13H14" stroke="#444" /></>} /><span>条件格式</span><Caret /></Command>
              <Command><GridIcon extra={<><rect x="5" y="5" width="8" height="8" fill="#8fb4ec" /><path d="M5 9H13M9 5V13" stroke="#fff" /><path d="M8 15L15 5" stroke="#d09a30" strokeWidth="2" /><path d="M7 15L10 12" stroke="#3f68b8" strokeWidth="4" /></>} /><span>套用表格格式</span><Caret /></Command>
              <Command><GridIcon extra={<><rect x="2" y="4" width="10" height="6" fill="#a8c8f4" /><path d="M8 15L15 5" stroke="#d09a30" strokeWidth="2" /><path d="M7 15L10 12" stroke="#3f68b8" strokeWidth="4" /></>} /><span>单元格样式</span><Caret /></Command>
            </CommandList>
            <GroupFooter text="样式" />
          </Group>

          <Group $w={68}>
            <CommandList>
              <Command><svg width="16" height="16" fill="#fff" stroke="#667"><rect x=".5" y=".5" width="5" height="4" /><rect x=".5" y="10.500" width="5" height="4" /><rect x="11.500" y="5.500" width="4" height="4" /><path d="M6 7.500H11M9 5.500V9.500" /></svg><span>插入</span><Caret /></Command>
              <Command><svg width="16" height="16" fill="#fff" stroke="#667"><rect x=".5" y="1.500" width="5" height="4" /><rect x=".5" y="10.500" width="5" height="4" /><rect x="3.500" y="5.500" width="5" height="4" /><path d="M8 2L15 9M15 2L8 9" stroke="#dc3c28" strokeWidth="2.500" /></svg><span>删除</span><Caret /></Command>
              <Command><svg width="16" height="16" fill="#fff" stroke="#678"><rect x="1.500" y="3.500" width="13" height="11" /><path d="M1 7H15M1 11H15M5 0V15M11 0V15" /><rect x="5.500" y="7.500" width="5" height="3" fill="#9abcf0" /></svg><span>格式</span><Caret /></Command>
            </CommandList>
            <GroupFooter text="单元格" />
          </Group>
          <Group />
        </Ribbon>

        <FormulaBar>
          <NameBox aria-label="名称框" defaultValue="B25" />
          <PlainButton $w={21} aria-label="名称列表"><svg width="8" height="5"><path d="M0 0H8L4 4.500Z" fill="#000" /></svg></PlainButton>
          <FunctionBox><Knob />fx</FunctionBox>
          <FormulaInput aria-label="编辑栏" defaultValue="加" />
        </FormulaBar>

        <SheetView>
          <Sheet>
            <colgroup>
              <col width="33" />
              <col width="148" />
              <col width="550" />
              <col width="71" />
              <col />
            </colgroup>
            <thead>
              <tr>
                <Corner />
                <ColHead>A</ColHead>
                <ColHead $on>B</ColHead>
                <ColHead>C</ColHead>
                <ColHead />
              </tr>
            </thead>
            <tbody>
              {sheetRows.map(([n, a, b]) => (
                <tr key={n}>
                  <RowHead $on={n === 25}>{n}</RowHead>
                  <Cell $line colSpan={b ? 1 : 2} $right={!b}><Runs text={a} /></Cell>
                  {b && <Cell $line $left $right $active={n === 25}><Runs text={b} /></Cell>}
                  <Cell />
                  <Cell />
                </tr>
              ))}
            </tbody>
          </Sheet>
        </SheetView>

        <SheetBar>
          <SheetNav>
            {["M1 0V8M7 0V8L3 4Z", "M6 0V8L2 4Z", "M2 0V8L6 4Z", "M7 0V8M1 0V8L5 4Z"].map((d) => (
              <PlainButton key={d} $w={10} aria-label="工作表导航"><svg width="8" height="8"><path d={d} fill="#1b4486" stroke="#1b4486" strokeWidth=".8" /></svg></PlainButton>
            ))}
          </SheetNav>
          <SheetTab>制作单</SheetTab>
          <NewSheet aria-label="插入工作表">
            <svg width="16" height="13"><path d="M4 3H13V9L11 11H6L4 9Z" fill="#f4f8ff" stroke="#6080b8" /><path d="M4 0V7M0 3.500H8M1 1L7 6M7 1L1 6" stroke="#e8952c" /></svg>
          </NewSheet>
          <HScroll>
            <Splitter />
            <svg width="5" height="9"><path d="M5 0V9L0 4.500Z" fill="#35528c" /></svg>
            <HThumb><svg width="8" height="7"><path d="M.5 0V7M2.500 0V7M4.500 0V7M6.500 0V7" stroke="#68788e" /></svg></HThumb>
          </HScroll>
        </SheetBar>
        <StatusBar>
          <StatusText>就绪</StatusText>
          <ViewArea>
            <ViewButtons>
              <ViewButton $on aria-label="普通"><svg width="13" height="11"><path d="M.5 .5H12.500V10.500H.5ZM0 4H13M0 7H13M4.500 0V11M8.500 0V11" fill="#fff" stroke="#665c40" /></svg></ViewButton>
              <ViewButton aria-label="页面布局"><svg width="13" height="12"><rect x=".5" y=".5" width="12" height="11" fill="#b4b8bc" stroke="#555" /><rect x="3.500" y="2.500" width="6" height="7" fill="#fff" stroke="#666" /></svg></ViewButton>
              <ViewButton aria-label="分页预览"><svg width="13" height="12"><rect x=".5" y=".5" width="12" height="11" fill="#a4a8ac" stroke="#555" /><path d="M1.500 1.500H5V7H1.500ZM6 1.500H9V7H6Z" fill="#fff" stroke="#777" /></svg></ViewButton>
            </ViewButtons>
            <Zoom>100%</Zoom>
          </ViewArea>
        </StatusBar>
      </Excel>

      <GreenFrame />
      <Overlay fill="#ff0080">
        <path d="M507 597L565 523" stroke="#ff0080" strokeWidth="8" />
        <path d="M579 507Q576 505 573 508L553 522L568 535Z" />
        <path d="M778 655L930 557" stroke="#ff0080" strokeWidth="7" strokeLinecap="round" />
        <path d="M950 541Q948 538 943 540L921 550L923 556L932 563Z" />
      </Overlay>
      <CountBadge>81</CountBadge>
    </Desktop>
  );
}
